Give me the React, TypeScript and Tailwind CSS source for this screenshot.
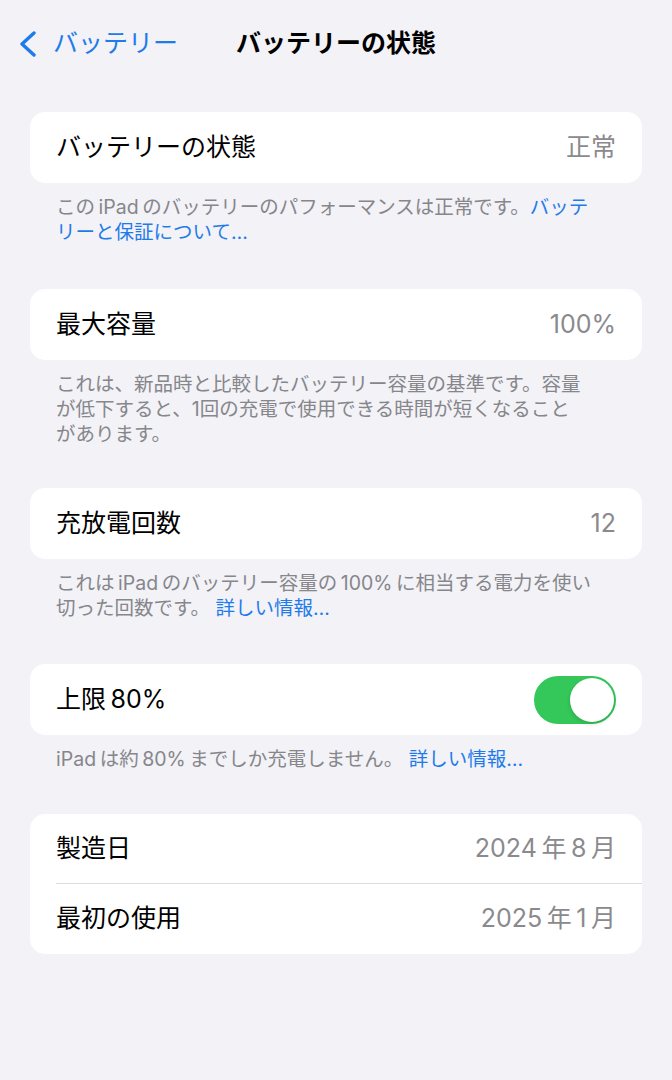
import React from "react";

const font = { fontFamily: 'Inter, "Noto Sans CJK JP", "Noto Sans", sans-serif' };
const T = "\u2009";

function Row({ label, value, children }: { label: string; value?: string; children?: React.ReactNode }) {
  return (
    <div className="flex h-[71px] items-center justify-between px-[26px]">
      <span className="text-[25px] text-black">{label}</span>
      {value !== undefined ? <span className="text-[25px] text-[#8a8a8e]">{value}</span> : children}
    </div>
  );
}

function Card({ children }: { children: React.ReactNode }) {
  return <div className="mx-[30px] overflow-hidden rounded-[15px] bg-white">{children}</div>;
}

function Note({ children, className }: { children: React.ReactNode; className: string }) {
  return (
    <div className={`whitespace-nowrap px-[56px] pt-[12px] text-[19.5px] leading-[25px] text-[#86868b] ${className}`}>
      {children}
    </div>
  );
}

const Link = ({ children }: { children: React.ReactNode }) => <span className="text-[#1f7bea]">{children}</span>;

export default function App() {
  return (
    <div className="min-h-[1080px] w-[672px] bg-[#f2f2f7]" style={font}>
      <div className="grid h-[88px] grid-cols-[1fr_auto_1fr] items-center">
        <div className="flex items-center gap-[15px] pl-[18px] text-[#1f7bea]">
          <svg width="20" height="26" viewBox="0 0 20 26" fill="none">
            <polyline points="16,2 4,13 16,24" stroke="#1f7bea" strokeWidth="3.4" strokeLinecap="round" strokeLinejoin="round" />
          </svg>
          <span className="text-[25px]">バッテリー</span>
        </div>
        <div className="text-[25px] font-bold text-black">バッテリーの状態</div>
        <div />
      </div>
      <div className="h-[24px]" />

      <Card>
        <Row label="バッテリーの状態" value="正常" />
      </Card>
      <Note className="pb-[44px]">
        この{T}iPad{T}のバッテリーのパフォーマンスは正常です。<Link>バッテ<br />リーと保証について…</Link>
      </Note>

      <Card>
        <Row label="最大容量" value="100%" />
      </Card>
      <Note className="pb-[41px]">
        これは、新品時と比較したバッテリー容量の基準です。容量
        <br />
        が低下すると、1回の充電で使用できる時間が短くなること
        <br />
        があります。
      </Note>

      <Card>
        <Row label="充放電回数" value="12" />
      </Card>
      <Note className="pb-[43px]">
        これは{T}iPad{T}のバッテリー容量の{T}100%{T}に相当する電力を使い
        <br />
        切った回数です。 <Link>詳しい情報…</Link>
      </Note>

      <Card>
        <Row label={`上限${T}80%`}>
          <div className="flex h-[48px] w-[82px] items-center justify-end rounded-full bg-[#34c759] p-[2px]">
            <div className="h-[44px] w-[44px] rounded-full bg-white shadow-[0_2px_4px_rgba(0,0,0,0.15)]" />
          </div>
        </Row>
      </Card>
      <Note className="pb-[42px]">
        iPad{T}は約{T}80%{T}までしか充電しません。 <Link>詳しい情報…</Link>
      </Note>

      <Card>
        <div className="flex h-[69px] items-center justify-between px-[26px]">
          <span className="text-[25px] text-black">製造日</span>
          <span className="text-[25px] text-[#8a8a8e]">2024{T}年{T}8{T}月</span>
        </div>
        <div className="ml-[26px] h-px bg-[#dcdce0]" />
        <div className="flex h-[70px] items-center justify-between px-[26px]">
          <span className="text-[25px] text-black">最初の使用</span>
          <span className="text-[25px] text-[#8a8a8e]">2025{T}年{T}1{T}月</span>
        </div>
      </Card>
    </div>
  );
}
